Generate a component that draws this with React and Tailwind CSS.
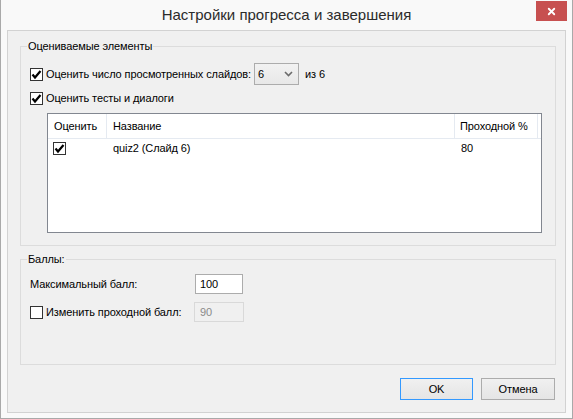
import { X } from 'lucide-react';

// Checkbox в стиле Windows 8
function Check({ checked }) {
  return (
    <span className="flex h-[13px] w-[13px] shrink-0 items-center justify-center border border-[#333333] bg-white">
      {checked && (
        <svg width="11" height="11" viewBox="0 0 11 11">
          <path d="M1.5 5.5 L4 8.5 L9.5 2" fill="none" stroke="#000" strokeWidth="2.2" />
        </svg>
      )}
    </span>
  );
}

function Button({ children, focused }) {
  return (
    <button
      className={
        'h-[22px] bg-gradient-to-b from-[#f0f0f0] to-[#e5e5e5] text-[11px] text-black border ' +
        (focused ? 'w-[73px] border-[#3399ff]' : 'w-[74px] border-[#acacac]')
      }
    >
      {children}
    </button>
  );
}

export default function App() {
  return (
    <div className="flex h-[419px] w-[573px] flex-col border border-t-0 border-[#a9a9a9] bg-[#f9f9f9] font-['Liberation_Sans',Arial,sans-serif] text-[11px] tracking-[-0.1px] text-black">
      {/* Title bar */}
      <div className="relative flex h-[30px] shrink-0 items-center justify-center">
        <span className="text-[15px] tracking-normal text-[#2b2b2b]">Настройки прогресса и завершения</span>
        <div className="absolute right-[5px] top-[1px] flex h-[20px] w-[31px] items-center justify-center bg-[#c75050]">
          <X className="h-[11px] w-[11px] text-white" strokeWidth={4} />
        </div>
      </div>

      {/* Client area */}
      <div className="mx-[6px] flex h-[383px] flex-col border border-[#d2d2d2] bg-[#f0f0f0] pl-[12px] pr-[9px] pt-[9px]">
        {/* Оцениваемые элементы */}
        <fieldset className="h-[206px] border border-[#dcdcdc]">
          <legend className="ml-[6px] px-[1px] leading-[13px]">Оцениваемые элементы</legend>
          <div className="flex h-[22px] items-center pl-[9px] mt-[10px]">
            <Check checked />
            <span className="ml-[3px]">Оценить число просмотренных слайдов:</span>
            <div className="ml-[3px] flex h-[22px] w-[45px] items-center justify-between border border-[#acacac] bg-gradient-to-b from-[#f2f2f2] to-[#e8e8e8] pl-[3px] pr-[5px]">
              <span>6</span>
              <svg width="9" height="6" viewBox="0 0 9 6">
                <path d="M1 1 L4.5 4.5 L8 1" fill="none" stroke="#6b6b6b" strokeWidth="1.6" />
              </svg>
            </div>
            <span className="ml-[6px]">из 6</span>
          </div>
          <div className="mt-[7px] flex h-[13px] items-center pl-[9px]">
            <Check checked />
            <span className="ml-[3px]">Оценить тесты и диалоги</span>
          </div>
          <div className="ml-[26px] mt-[8px] h-[120px] w-[495px] border border-[#828790] bg-white">
            <div className="grid h-[25px] grid-cols-[59px_348px_1fr] border-b border-[#e5eaf1]">
              <div className="flex items-center border-r border-[#e5eaf1] pl-[6px]">Оценить</div>
              <div className="flex items-center border-r border-[#e5eaf1] pl-[6px]">Название</div>
              <div className="flex items-center pl-[5px] mr-[3px] border-r border-[#e5eaf1]">Проходной %</div>
            </div>
            <div className="grid h-[18px] grid-cols-[59px_348px_1fr]">
              <div className="flex items-center pl-[5px]">
                <Check checked />
              </div>
              <div className="flex items-center pl-[6px]">quiz2 (Слайд 6)</div>
              <div className="flex items-center pl-[6px]">80</div>
            </div>
          </div>
        </fieldset>

        {/* Баллы */}
        <fieldset className="mt-[7px] h-[112px] border border-[#dcdcdc]">
          <legend className="ml-[6px] px-[1px] leading-[13px]">Баллы:</legend>
          <div className="mt-[8px] flex h-[20px] items-center pl-[9px]">
            <span className="w-[165px]">Максимальный балл:</span>
            <div className="flex h-[20px] w-[48px] items-center border border-[#acacac] bg-white pl-[4px]">100</div>
          </div>
          <div className="mt-[8px] flex h-[20px] items-center pl-[9px]">
            <Check />
            <span className="ml-[3px] w-[148px]">Изменить проходной балл:</span>
            <div className="flex h-[20px] w-[50px] items-center border border-[#d9d9d9] bg-[#f0f0f0] pl-[5px] text-[#8a8a8a]">90</div>
          </div>
        </fieldset>

        {/* Buttons */}
        <div className="mt-[13px] flex justify-end gap-[8px] pr-[1px]">
          <Button focused>OK</Button>
          <Button>Отмена</Button>
        </div>
      </div>
    </div>
  );
}
